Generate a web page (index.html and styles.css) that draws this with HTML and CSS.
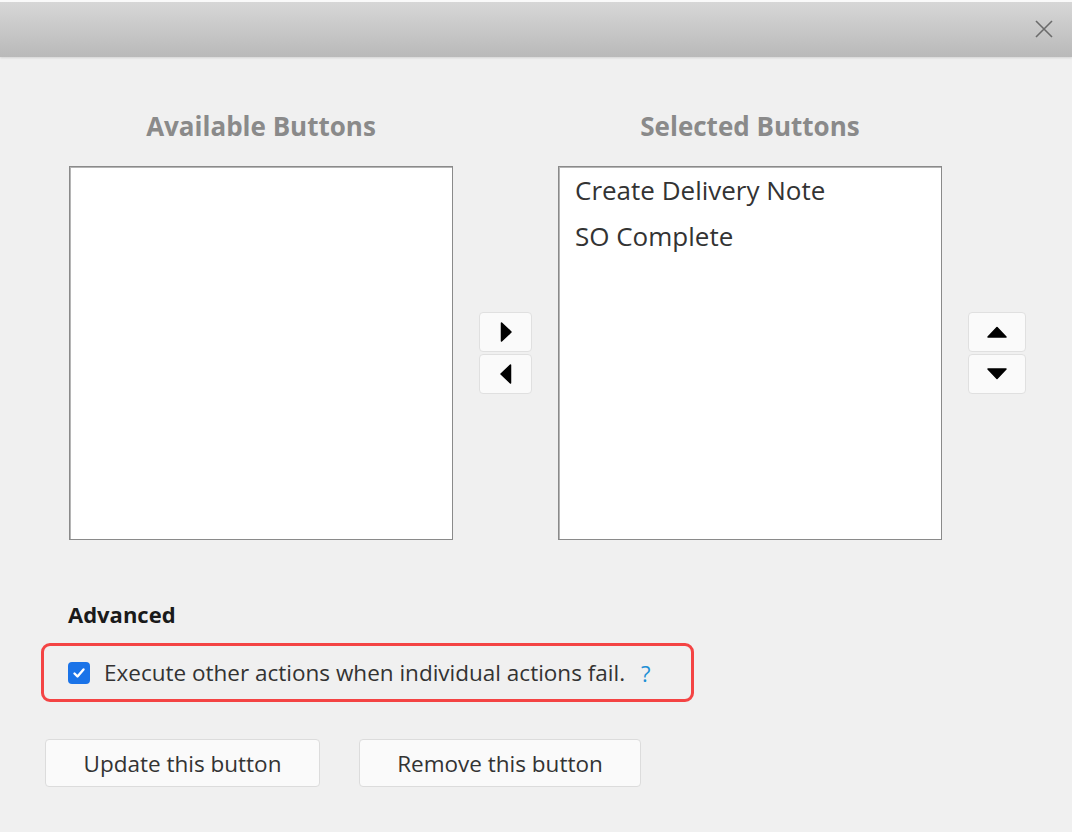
FILE: index.html
```html
<!DOCTYPE html>
<html lang="en">

<head>
  <meta charset="UTF-8">
  <meta name="viewport" content="width=device-width, initial-scale=1.0">
  <title>Button Settings</title>
  <link rel="stylesheet" href="styles.css">
</head>

<body>
  <div class="dialog">
    <div class="titlebar">
      <button class="close" title="Close">
        <svg width="20" height="20" viewBox="0 0 20 20"><path d="M2 2L18 18M18 2L2 18" stroke="#6b6b6b" stroke-width="1.6" fill="none"/></svg>
      </button>
    </div>

    <div class="content">
      <div class="pickers">
        <div class="col">
          <h2 class="col-title">Available Buttons</h2>
          <div class="listbox"></div>
        </div>

        <div class="ctrls">
          <!-- move right / move left -->
          <button class="ctrl"><svg width="14" height="22" viewBox="0 0 14 22"><path d="M2.5 2L12 11L2.5 20Z" fill="#000" stroke="#000" stroke-width="1.5" stroke-linejoin="round"/></svg></button>
          <button class="ctrl"><svg width="14" height="22" viewBox="0 0 14 22"><path d="M11.5 2L2 11L11.5 20Z" fill="#000" stroke="#000" stroke-width="1.5" stroke-linejoin="round"/></svg></button>
        </div>

        <div class="col">
          <h2 class="col-title">Selected Buttons</h2>
          <div class="listbox">
            <div class="item">Create Delivery Note</div>
            <div class="item">SO Complete</div>
          </div>
        </div>

        <div class="ctrls updown">
          <!-- move up / move down -->
          <button class="ctrl"><svg width="22" height="14" viewBox="0 0 22 14"><path d="M2 12L11 2.5L20 12Z" fill="#000" stroke="#000" stroke-width="1.5" stroke-linejoin="round"/></svg></button>
          <button class="ctrl"><svg width="22" height="14" viewBox="0 0 22 14"><path d="M2 2L11 11.5L20 2Z" fill="#000" stroke="#000" stroke-width="1.5" stroke-linejoin="round"/></svg></button>
        </div>
      </div>

      <h3 class="adv-title">Advanced</h3>
      <div class="adv-box">
        <label class="check">
          <span class="checkmark"><svg width="14" height="14" viewBox="0 0 14 14"><path d="M2.5 7.5L5.5 10.5L11.5 3.5" stroke="#fff" stroke-width="2.4" fill="none" stroke-linecap="round" stroke-linejoin="round"/></svg></span>
          Execute other actions when individual actions fail.
        </label>
        <span class="help">?</span>
      </div>

      <div class="actions">
        <button class="btn btn-update">Update this button</button>
        <button class="btn btn-remove">Remove this button</button>
      </div>
    </div>
  </div>
</body>

</html>
```

FILE: styles.css
```css
* {
  box-sizing: border-box;
}

body {
  margin: 0;
  background: #f0f0f0;
  font-family: "Open Sans", "Noto Sans", sans-serif;
  color: #333;
}

.dialog {
  width: 1072px;
  height: 832px;
  background: #f0f0f0;
}

/* grey title strip */
.titlebar {
  height: 57px;
  border-top: 2px solid #fafafa;
  background: linear-gradient(#d7d7d7, #b9b9b9);
  box-shadow: 0 1px 2px rgba(0, 0, 0, .12);
  display: flex;
  justify-content: flex-end;
  align-items: center;
  padding-right: 18px;
}

.close {
  all: unset;
  display: flex;
  width: 20px;
  height: 20px;
  margin-top: -2px;
}

.content {
  padding: 54px 0 0 0;
}

.pickers {
  display: flex;
  padding-left: 69px;
  gap: 26px;
}

.col {
  width: 384px;
}

.col-title {
  margin: 0 0 25px;
  height: 30px;
  line-height: 30px;
  text-align: center;
  font-size: 26px;
  font-weight: 700;
  color: #8a8a8a;
}

.listbox {
  height: 374px;
  background: #fff;
  border: 1px solid #8a8a8a;
  box-shadow: inset 1px 1px 0 #b5b5b5;
  padding: 0 16px;
}

.item {
  font-size: 26px;
  line-height: 46px;
  color: #333;
}

.ctrls {
  align-self: flex-end;
  display: flex;
  flex-direction: column;
  gap: 2px;
  margin-bottom: 146px;
}

.ctrl {
  width: 53px;
  height: 40px;
  border: 1px solid #e0e0e0;
  border-radius: 4px;
  background: #fafafa;
  display: flex;
  align-items: center;
  justify-content: center;
  padding: 0;
}

.updown .ctrl {
  width: 58px;
}

.adv-title {
  margin: 60px 0 0 68px;
  font-size: 22px;
  line-height: 28px;
  font-weight: 700;
  color: #1a1a1a;
}

.adv-box {
  margin: 15px 0 0 41px;
  width: 653px;
  height: 59px;
  border: 3px solid #f44444;
  border-radius: 9px;
  display: flex;
  align-items: center;
  padding-left: 24px;
}

.check {
  display: flex;
  align-items: center;
  gap: 14px;
  font-size: 22.5px;
  color: #333;
}

.checkmark {
  width: 22px;
  height: 22px;
  border-radius: 4px;
  background: #1a73e8;
  display: flex;
  align-items: center;
  justify-content: center;
}

.help {
  margin-left: 16px;
  font-size: 22px;
  color: #1e8fd5;
}

.actions {
  display: flex;
  gap: 39px;
  margin: 37px 0 0 45px;
}

.btn {
  height: 48px;
  border: 1px solid #dcdcdc;
  border-radius: 4px;
  background: #fafafa;
  font-family: inherit;
  font-size: 22.5px;
  color: #333;
}

.btn-update {
  width: 275px;
}

.btn-remove {
  width: 282px;
}
```
